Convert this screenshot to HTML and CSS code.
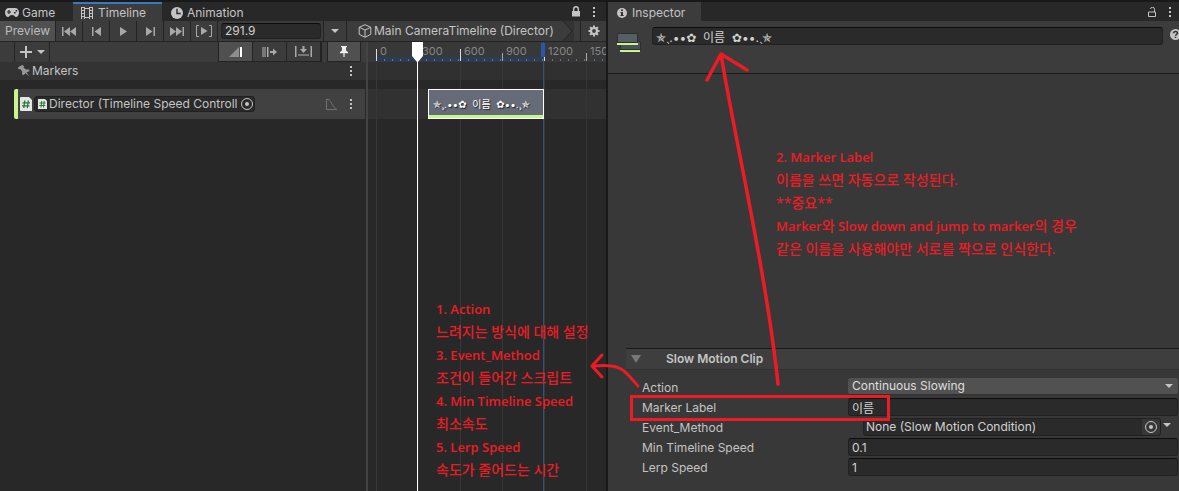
FILE: index.html
```html
<!DOCTYPE html>
<html lang="ko">
<head>
<meta charset="utf-8">
<title>Timeline</title>
<link rel="stylesheet" href="styles.css">
</head>
<body>
<div class="editor">
  <section class="timeline">
    <nav class="tabs">
      <button class="tab tab-game"><svg width="14" height="9" viewBox="0 0 14 9"><path fill="currentColor" fill-rule="evenodd" d="M4 0h6c2.400 0 4 2 4 4.500S12.500 9 11 9c-1.300 0-1.600-2-4-2S4.300 9 3 9C1.500 9 0 7 0 4.500S1.600 0 4 0zM3.400 2v1.400H2v1.200h1.400V6h1.200V4.600H6V3.400H4.600V2zM9 4v1.600h1.600V4zM10.600 2v1.600h1.600V2z"/></svg>Game</button>
      <button class="tab tab-timeline active"><svg width="12" height="12" viewBox="0 0 12 12"><path fill="none" stroke="currentColor" d="M.5 0v12M3.500 0v12M8.500 0v12M11.500 0v12M3 1.500h6M3 10.500h6M0 .5h3M0 3.500h3M0 6.500h3M0 9.500h3M9 .5h3M9 3.500h3M9 6.500h3M9 9.500h3"/></svg>Timeline</button>
      <button class="tab tab-animation"><svg width="12" height="12" viewBox="0 0 13 13"><circle cx="6.500" cy="6.500" r="6.500" fill="currentColor"/><path d="M6.500 2v5h4" fill="none" stroke="#282828" stroke-width="1.500"/></svg>Animation</button>
      <span class="tab-tools">
        <button class="icon" aria-label="Lock"><svg width="8" height="11" viewBox="0 0 8 11"><path fill="currentColor" d="M0 5h8v5.500H0z"/><path fill="none" stroke="currentColor" stroke-width="1.400" d="M1.700 5V3a2.300 2.300 0 0 1 4.600 0v2"/></svg></button>
        <button class="icon dots" aria-label="Menu"><i></i><i></i><i></i></button>
      </span>
    </nav>
    <div class="toolbar">
      <button class="preview">Preview</button>
      <button class="play" aria-label="First frame"><svg width="14" height="9" viewBox="0 0 14 9"><path fill="currentColor" d="M0 0h1.500v9H0zM8 0v9L2 4.500zM14 0v9L8 4.500z"/></svg></button>
      <button class="play" aria-label="Previous frame"><svg width="9" height="9" viewBox="0 0 9 9"><path fill="currentColor" d="M0 0h1.500v9H0zM9 0v9L2.500 4.500z"/></svg></button>
      <button class="play" aria-label="Play"><svg width="7" height="9" viewBox="0 0 7 9"><path fill="currentColor" d="M0 0l7 4.500L0 9z"/></svg></button>
      <button class="play" aria-label="Next frame"><svg width="9" height="9" viewBox="0 0 9 9"><path fill="currentColor" d="M0 0l6.500 4.500L0 9zM7.500 0H9v9H7.500z"/></svg></button>
      <button class="play" aria-label="Last frame"><svg width="14" height="9" viewBox="0 0 14 9"><path fill="currentColor" d="M0 0l6 4.500L0 9zM6 0l6 4.500L6 9zM12.500 0H14v9h-1.500z"/></svg></button>
      <button class="play" aria-label="Play range"><svg width="16" height="12" viewBox="0 0 16 12"><path fill="currentColor" d="M5 2l6.500 4L5 10z"/><path fill="none" stroke="currentColor" d="M3 .5H.5v11H3M13 .5h2.500v11H13"/></svg></button>
      <div class="frame-box"><input class="field frame" aria-label="Frame" value="291.9"></div>
      <button class="frame-menu" aria-label="Sequence"><span class="caret"></span></button>
      <div class="crumb"><svg width="14" height="14" viewBox="0 0 14 14"><path fill="none" stroke="currentColor" d="M7 .7l5.800 2.600v7L7 13.300l-5.800-3v-7zM1.200 3.300L7 6l5.800-2.700M7 6v7.300"/></svg><span>Main CameraTimeline (Director)</span><svg class="chevron" width="12" height="20" viewBox="0 0 12 20"><path fill="#333" d="M0 0h12v20H0z"/><path fill="#3c3c3c" stroke="#262626" d="M0-1l10 11L0 21"/></svg></div>
      <button class="gear" aria-label="Settings"><svg width="12" height="12" viewBox="0 0 12 12"><circle cx="6" cy="6" r="3" fill="none" stroke="currentColor" stroke-width="2.200"/><path stroke="currentColor" stroke-width="2" d="M6 .5v2M6 9.500v2M.5 6h2M9.500 6h2M2.100 2.100l1.400 1.400M8.500 8.500l1.400 1.400M9.900 2.100L8.500 3.500M3.500 8.500L2.100 9.900"/></svg></button>
    </div>
    <div class="sequence">
      <div class="heads">
        <div class="head-bar">
          <button class="add" aria-label="Add track"><svg width="12" height="12" viewBox="0 0 12 12"><path stroke="currentColor" stroke-width="2" d="M6 0v12M0 6h12"/></svg><span class="caret"></span></button>
          <span class="modes">
            <button class="mode on" aria-label="Mix"><svg width="14" height="10" viewBox="0 0 14 10"><path fill="#8e8e8e" d="M0 10L10 0v10z"/><path fill="#fff" d="M11 0h2v10h-2z"/></svg></button>
            <button class="mode" aria-label="Ripple"><svg width="15" height="10" viewBox="0 0 15 10"><path fill="#777" d="M0 0h4v10H0z"/><path fill="#aaa" d="M5 0h1.500v10H5zM8 4h3V1.500l4 3.500-4 3.500V6H8z"/></svg></button>
            <button class="mode" aria-label="Replace"><svg width="17" height="11" viewBox="0 0 17 11"><path fill="#777" d="M3 8h11v2H3z"/><path fill="#aaa" d="M0 0h1.500v11H0zM15.500 0H17v11h-1.500zM7.500 0h2v3H12L8.500 7 5 3h2.500z"/></svg></button>
          </span>
          <button class="mode pin on" aria-label="Show markers"><svg width="8" height="11" viewBox="0 0 8 11"><path fill="#eee" d="M1 0h6v1.200H6v3.300L8 6v1.200H4.600V11H3.400V7.200H0V6l2-1.500V1.200H1z"/></svg></button>
        </div>
        <div class="markers"><svg width="12" height="12" viewBox="0 0 12 12"><path fill="#999" d="M4 0l2 1-.5 1.500 2.500 2L11 4.500l.5 1.500L8.500 7.500l3 4-4-3.300L5.500 10 4 9.500 4.200 6.500 2.200 4 .5 4.200 0 2.500z"/></svg><span>Markers</span><button class="icon dots" aria-label="Marker options"><i></i><i></i><i></i></button></div>
        <div class="track">
          <svg width="12" height="14" viewBox="0 0 12 14"><path fill="#e6e6e6" d="M1 0h8l3 3v11H1a1 1 0 0 1-1-1V1a1 1 0 0 1 1-1z"/><path fill="none" stroke="#287a35" stroke-width="1.300" d="M4.800 3.500l-1 7.500M8.300 3.500l-1 7.500M2.500 5.800h7.500M2 8.800h7.500"/></svg>
          <div class="binding"><svg width="9" height="10" viewBox="0 0 9 10"><path fill="#e6e6e6" d="M0 0h7l2 2v8H0z"/><path fill="none" stroke="#287a35" d="M3.700 2L3 8.500M6.200 2l-.7 6.500M1.500 4h6M1.300 6.500h6"/></svg><span>Director (Timeline Speed Controll</span><button class="picker" aria-label="Select object"></button></div>
          <svg class="curve" width="11" height="11" viewBox="0 0 11 11"><path fill="none" stroke="#707070" d="M.5 0v10.500H11M0 .5h3c2 1 4 9 7.500 9.500"/></svg>
          <button class="icon dots" aria-label="Track options"><i></i><i></i><i></i></button>
        </div>
      </div>
      <div class="canvas">
        <div class="ruler"></div>
        <div class="marker-lane"></div>
        <div class="track-lane"></div>
        <div class="scale"><span class="range"></span><span class="step major">0</span><span class="step">300</span><span class="step major">600</span><span class="step">900</span><span class="step major">1200</span><span class="step">1500</span></div>
        <div class="end"></div>
        <div class="clip">✯¸.••✿&nbsp; 이름 &nbsp;✿••.¸✯</div>
        <div class="playhead"><svg width="11" height="20" viewBox="0 0 11 20"><path fill="#fff" d="M0 0h11v14l-5 6H5l-5-6z"/></svg></div>
      </div>
    </div>
  </section>

  <section class="inspector">
    <nav class="tabs">
      <button class="tab tab-inspector active"><svg width="10" height="10" viewBox="0 0 10 10"><circle cx="5" cy="5" r="5" fill="currentColor"/><path fill="#333" d="M4 1.500h2V3H4zM3.500 4H6v3h.7v1H3.400V7H4V5h-.5z"/></svg>Inspector</button>
      <span class="tab-tools">
        <button class="icon" aria-label="Lock inspector"><svg width="8" height="10" viewBox="0 0 8 10"><path fill="none" stroke="currentColor" d="M.5 5h7v4.500h-7zM6.500 5V2.500a2 2 0 0 0-4-.5"/></svg></button>
        <button class="icon dots" aria-label="Inspector menu"><i></i><i></i><i></i></button>
      </span>
    </nav>
    <header class="asset">
      <svg width="24" height="20" viewBox="0 0 24 20"><path fill="#4b5157" stroke="#2c2f32" d="M3.500 8.500h20v8h-20z"/><path fill="#c8f58c" d="M3 17h20v2H3z"/><path fill="#565d64" stroke="#2c2f32" d="M.5.5h20v9H.5z"/><path fill="#c8f58c" d="M0 10h21v2H0z"/></svg>
      <input class="field name" aria-label="Name" value="✯¸.••✿&nbsp; 이름 &nbsp;✿••.¸✯">
      <button class="icon help" aria-label="Help"><svg width="11" height="11" viewBox="0 0 11 11"><circle cx="5.500" cy="5.500" r="5.500" fill="currentColor"/><path fill="none" stroke="#333" stroke-width="1.500" d="M3.500 4.300c0-2.500 4-2.400 4-.2 0 1.300-2 1.200-2 2.700M5.500 7.700v1.300"/></svg></button>
    </header>
    <div class="component">
      <h2 class="component-title"><button class="foldout" aria-label="Collapse"></button>Slow Motion Clip</h2>
      <form class="props">
        <label for="action">Action</label>
        <div class="select-box"><select id="action"><option>Continuous Slowing</option></select><span class="caret"></span></div>
        <label for="marker">Marker Label</label>
        <input class="field" id="marker" value="이름">
        <label for="event">Event_Method</label>
        <div class="event"><div class="object"><input id="event" value="None (Slow Motion Condition)"><button type="button" class="picker" aria-label="Select condition"></button></div><button type="button" class="icon" aria-label="Condition options"><span class="caret"></span></button></div>
        <label for="speed">Min Timeline Speed</label>
        <input class="field" id="speed" value="0.1">
        <label for="lerp">Lerp Speed</label>
        <input class="field" id="lerp" value="1">
      </form>
    </div>
  </section>

  <svg class="strokes" width="1179" height="491" viewBox="0 0 1179 491"><g fill="none" stroke="#ed1c24" stroke-width="3" stroke-linecap="round" stroke-linejoin="round"><path stroke-width="3.500" d="M778 384C766 270 733 130 721 54M707 80l14-26 26 16"/><path d="M638 386C626 372 622 367 611 366C604 365 599 366 592 366M602 355l-10 11 10 11"/><path stroke-linejoin="miter" d="M631.500 396.500h257v23h-257z"/></g></svg>
  <div class="note note-left">1. Action<br><span class="ko">느려지는 방식에 대해 설정</span><br>3. Event_Method<br><span class="ko">조건이 들어간 스크립트</span><br>4. Min Timeline Speed<br><span class="ko">최소속도</span><br>5. Lerp Speed<br><span class="ko">속도가 줄어드는 시간</span></div>
  <div class="note note-right">2. Marker Label<br><span class="ko">이름을 쓰면 자동으로 작성된다.</span><br><span class="ko">**중요**</span><br>Marker<span class="ko">와</span> Slow down and jump to marker<span class="ko">의 경우</span><br><span class="ko">같은 이름을 사용해야만 서로를 짝으로 인식한다.</span></div>
</div>
</body>
</html>
```

FILE: styles.css
```css
* { box-sizing: border-box; }
body { margin: 0; background: #191919; color: #c4c4c4; font: 12px/16px Inter, "DejaVu Sans", "Noto Sans CJK KR", sans-serif; }
button, input, select { margin: 0; padding: 0; border: 0; border-radius: 0; background: none; color: inherit; font: inherit; outline: 0; }
svg { flex: none; display: block; }
.editor { position: relative; display: grid; grid-template-columns: minmax(0, 606fr) minmax(0, 571fr); column-gap: 2px; min-height: 100vh; padding-top: 2px; overflow: hidden; white-space: nowrap; }
.timeline, .inspector { display: flex; flex-direction: column; min-width: 0; }

.tabs { display: flex; height: 19px; background: #282828; }
.tab { display: flex; align-items: center; gap: 3px; padding: 2px 0 0 5px; }
.tab.active { background: #3c3c3c; }
.tab-game { width: 73px; }
.tab-timeline { width: 89px; gap: 5px; padding-left: 8px; border-top: 2px solid #3a79bb; padding-top: 0; }
.tab-animation { gap: 4px; padding-left: 9px; }
.tab-inspector { width: 93px; gap: 5px; padding-left: 9px; }
.tab-tools { display: flex; align-items: center; gap: 12px; margin-left: auto; padding-right: 11px; }
.inspector .tab-tools { padding-right: 8px; gap: 12px; }
.icon { display: flex; align-items: center; justify-content: center; }
.dots { flex-direction: column; gap: 2px; width: 3px; }
.dots i { width: 2px; height: 2px; background: #c4c4c4; }
.caret { border: 4px solid transparent; border-top-color: #c4c4c4; border-bottom: 0; }

.toolbar { display: flex; height: 21px; background: #3c3c3c; border-bottom: 1px solid #232323; }
.toolbar > * { border-right: 1px solid #232323; }
.preview { width: 56px; background: #505050; color: #bdbdbd; }
.play { display: flex; align-items: center; justify-content: center; width: 27px; color: #a8a8a8; }
.frame-box { display: flex; align-items: center; width: 106px; padding: 0 2px 0 3px; }
.field { min-width: 0; width: 100%; height: 18px; padding: 0 3px; background: #2a2a2a; border: 1px solid #212121; border-top-color: #0d0d0d; border-radius: 3px; color: #d2d2d2; }
.frame { height: 16px; }
.frame-menu { display: flex; align-items: center; justify-content: center; width: 23px; }
.crumb { display: flex; flex: 1; align-items: center; gap: 2px; min-width: 0; padding-left: 11px; background: #3c3c3c; }
.chevron { margin-left: auto; margin-right: 6px; }
.gear { display: flex; align-items: center; justify-content: center; width: 25px; border-right: 0; }

.sequence { display: flex; flex: 1; background: #282828; }
.heads { width: 368px; border-right: 2px solid #444; }
.head-bar { display: flex; height: 20px; padding-left: 14px; background: #3c3c3c; }
.add { display: flex; align-items: center; gap: 5px; width: 36px; padding-left: 5px; border: solid #232323; border-width: 0 1px; }
.modes { display: flex; margin-left: auto; border: 1px solid #232323; border-top: 0; }
.mode { display: flex; align-items: center; justify-content: center; width: 34px; border-right: 1px solid #232323; }
.mode.on { background: #505050; }
.pin { margin: 0 5px; border: 1px solid #232323; border-top: 0; }
.markers { display: flex; align-items: center; gap: 2px; height: 18px; padding: 0 14px 0 18px; background: #333; }
.markers .dots { margin-left: auto; }
.track { display: flex; align-items: center; height: 30px; margin: 9px 1px 0 14px; padding: 0 13px 0 2px; background: #414141; border-left: 4px solid #c8f58c; border-radius: 2px 0 0 2px; }
.binding { display: flex; align-items: center; width: 221px; height: 16px; margin-left: 2px; padding-left: 3px; background: #2a2a2a; border: 1px solid #212121; border-radius: 3px; }
.binding span { flex: 1; min-width: 0; padding-left: 2px; }
.picker { position: relative; flex: none; width: 18px; height: 100%; background: #373737; border-radius: 0 3px 3px 0; }
.picker::before { content: ""; position: absolute; inset: 0; width: 10px; height: 10px; margin: auto; border: 1px solid #c4c4c4; border-radius: 50%; }
.picker::after { content: ""; position: absolute; inset: 0; width: 4px; height: 4px; margin: auto; border-radius: 50%; background: #c4c4c4; }
.binding .picker { width: 15px; background: none; }
.curve { margin-left: auto; margin-right: 12px; }

.canvas { position: relative; flex: 1; min-width: 0; overflow: hidden; }
.ruler { height: 20px; background: #383838; }
.marker-lane { height: 18px; background: #303030; }
.track-lane { height: 30px; margin-top: 9px; background: #313131; }
.scale { position: absolute; inset: 0 0 0 8px; display: flex; }
.range { position: absolute; left: 0; top: 15px; width: 168px; height: 4px; background: #293c5c; }
.step { position: relative; flex: none; width: 42px; padding-left: 4px; color: #878787; font-size: 11px; line-height: 18px; background: linear-gradient(#373737, #373737) 0 19px / 1px 100% no-repeat; }
.step::before { content: ""; position: absolute; left: 0; top: 11px; width: 1px; height: 8px; background: #aaa; }
.step.major::before { top: 7px; height: 12px; background: #ddd; }
.step::after { content: ""; position: absolute; left: 8px; top: 17px; width: 33px; height: 2px; background: repeating-linear-gradient(90deg, #65728a 0 1px, transparent 1px 8px); }
.end { position: absolute; left: 175px; top: 0; bottom: 0; width: 1px; background: #34507f; }
.end::before { content: ""; position: absolute; left: -2px; top: 1px; width: 4px; height: 14px; background: #2956a5; }
.clip { position: absolute; left: 60px; top: 47px; width: 116px; height: 30px; padding: 6px 0 0 4px; border: 1px solid #fff; background: #666b78; box-shadow: inset 0 -3px #c8f58c; color: #fff; font-size: 10px; text-shadow: 1px 1px 1px #222; }
.playhead { position: absolute; left: 44px; top: 0; bottom: 0; width: 11px; background: linear-gradient(#fff, #fff) 5px 0 / 1px 100% no-repeat; }

.inspector { background: #383838; }
.asset { display: flex; height: 53px; padding: 6px 0 0 9px; background: #3c3c3c; border-bottom: 1px solid #1a1a1a; }
.asset > svg { margin-top: 6px; }
.name { flex: 1; margin-left: 11px; }
.help { width: 11px; height: 14px; margin: 0 -2px 0 7px; }
.component { margin: auto 0 15px 18px; }
.component-title { display: flex; align-items: center; gap: 25px; height: 22px; margin: 0; padding-left: 5px; font-size: 12px; font-weight: 600; background: #3e3e3e; border-top: 1px solid #1a1a1a; border-bottom: 1px solid #303030; }
.foldout { border: 5px solid transparent; border-top: 8px solid #777; border-bottom: 0; }
.props { display: grid; grid-template-columns: 206px minmax(0, 1fr); row-gap: 2px; margin: 8px 0 0; padding: 0 1px 0 16px; }
.props label { padding-top: 2px; height: 18px; }
.select-box { position: relative; height: 17px; background: #515151; border-radius: 3px; border-bottom: 1px solid #303030; }
.select-box select { display: block; appearance: none; width: 100%; height: 16px; padding-left: 4px; color: #dfdfdf; }
.select-box .caret { position: absolute; right: 5px; top: 6px; pointer-events: none; }
.event { display: flex; gap: 1px; padding-left: 15px; }
.object { display: flex; flex: 1; height: 18px; min-width: 0; background: #2a2a2a; border: 1px solid #212121; border-radius: 3px; }
.object input { flex: 1; min-width: 0; padding-left: 2px; color: #d2d2d2; }
.event .icon { width: 10px; height: 14px; margin-right: 6px; }

.strokes { position: absolute; left: 0; top: 0; pointer-events: none; }
.note { position: absolute; color: #ed1c24; font: 600 13px/23px "Open Sans", "Noto Sans CJK KR", sans-serif; }
.ko { font-size: 14px; font-weight: 500; line-height: 1; }
.note-left { left: 436px; top: 298px; }
.note-right { left: 776px; top: 146px; }
```
